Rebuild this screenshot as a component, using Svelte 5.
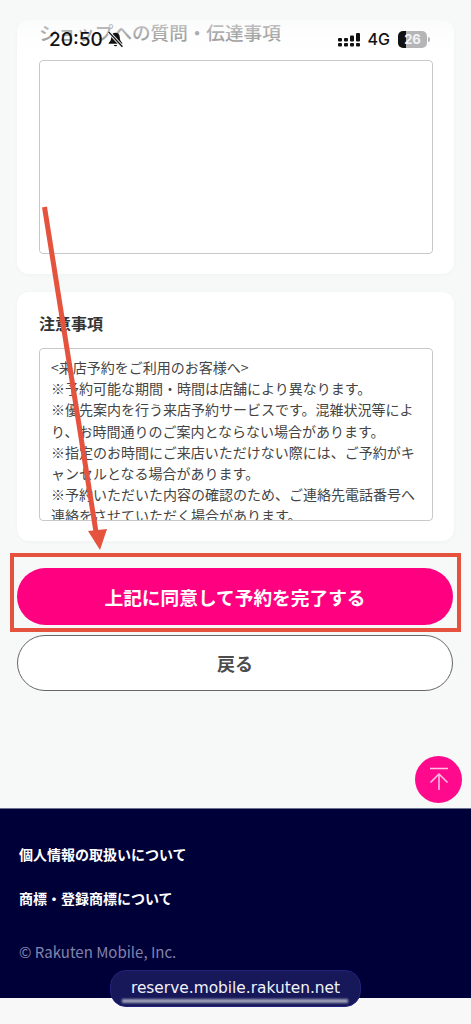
<script>
  // 注意事項の本文
  const notes = `<来店予約をご利用のお客様へ>
※予約可能な期間・時間は店舗により異なります。
※優先案内を行う来店予約サービスです。混雑状況等により、お時間通りのご案内とならない場合があります。
※指定のお時間にご来店いただけない際には、ご予約がキャンセルとなる場合があります。
※予約いただいた内容の確認のため、ご連絡先電話番号へ連絡をさせていただく場合があります。`;
</script>

<div class="page">
  <main>
    <section class="card first">
      <h2>ショップへの質問・伝達事項</h2>
      <div class="field"></div>
    </section>

    <section class="card second">
      <h2>注意事項</h2>
      <div class="notes">{notes}</div>
    </section>

    <div class="actions">
      <button class="primary">上記に同意して予約を完了する</button>
      <button class="back">戻る</button>
    </div>
  </main>

  <footer>
    <a href="#privacy">個人情報の取扱いについて</a>
    <a href="#trademark">商標・登録商標について</a>
    <p>© Rakuten Mobile, Inc.</p>
  </footer>
  <div class="bottom"></div>

  <!-- ステータスバー -->
  <div class="status">
    <div class="left">
      <span class="time">20:50</span>
      <svg width="17" height="17" viewBox="0 0 16 16">
        <path d="M8 1.600c-2.600 0-4 2-4 4.200 0 3-1.500 4.400-2.400 5.400v.8h12.800v-.8c-.9-1-2.400-2.400-2.400-5.400 0-2.200-1.400-4.200-4-4.200z" fill="#111" />
        <path d="M6.300 13.200a1.800 1.800 0 0 0 3.400 0z" fill="#111" />
        <path d="M1.500 .8 14.500 14.800" stroke="#eeeeef" stroke-width="3" />
        <path d="M1.500 .8 14.500 14.800" stroke="#111" stroke-width="1.200" />
      </svg>
    </div>
    <div class="right">
      <svg width="24" height="15" viewBox="0 0 24 15" fill="#111">
        <rect x="1" y="6" width="4" height="3.500" rx="1" />
        <rect x="1" y="11" width="4" height="3.500" rx="1" />
        <rect x="7" y="6" width="4" height="3.500" rx="1" />
        <rect x="7" y="11" width="4" height="3.500" rx="1" />
        <rect x="13" y="3.500" width="4" height="6" rx="1" />
        <rect x="13" y="11" width="4" height="3.500" rx="1" />
        <rect x="19" y="1" width="4" height="8.500" rx="1" />
        <rect x="19" y="11" width="4" height="3.500" rx="1" />
      </svg>
      <span class="net">4G</span>
      <div class="battery"><span>26</span></div>
    </div>
  </div>

  <button class="to-top" aria-label="ページ上部へ">
    <svg width="30" height="30" viewBox="0 0 30 30" fill="none" stroke="#ffc4e4" stroke-width="1.500">
      <path d="M6 3.500H24" />
      <path d="M15 9V25" />
      <path d="M6.500 17.500 15 9l8.500 8.500" />
    </svg>
  </button>

  <div class="url">
    <span>reserve.mobile.rakuten.net</span>
    <i></i>
  </div>

  <!-- 赤い注釈 -->
  <div class="frame"></div>
  <svg class="arrow" width="471" height="1024" viewBox="0 0 471 1024">
    <path d="M44.500 207 96 532" stroke="#e5533f" stroke-width="5" />
    <path d="M88 531 107 529 100 550z" fill="#e5533f" />
  </svg>
</div>

<style>
  :global(body) {
    margin: 0;
    background: #fff;
  }

  .page {
    position: relative;
    width: 471px;
    height: 1024px;
    overflow: hidden;
    font-family: "Noto Sans CJK JP", "Noto Sans", sans-serif;
    color: #333;
  }

  main {
    height: 808px;
    padding: 20px 17px 0;
    box-sizing: border-box;
    background: #f7f8f8;
  }

  .card {
    background: #fff;
    border-radius: 12px;
    box-sizing: border-box;
    padding: 0 21px 0 22px;
    box-shadow: 0 1px 4px rgba(0, 0, 0, 0.03);
  }

  .first {
    height: 254px;
  }

  .second {
    height: 249px;
    margin-top: 18px;
    padding-top: 19px;
  }

  h2 {
    margin: 0;
    font-size: 16px;
    line-height: 24px;
    font-weight: 700;
    color: #333;
  }

  .first h2 {
    height: 26px;
    font-size: 18.600px;
    line-height: 24px;
    font-weight: 500;
    color: #8f8f8f;
  }

  .field,
  .notes {
    border: 1px solid #c9c9cc;
    border-radius: 4px;
    background: #fff;
    box-sizing: border-box;
  }

  .field {
    height: 194px;
    margin-top: 14px;
  }

  .notes {
    height: 173px;
    margin-top: 13px;
    padding: 8px 11px 0;
    font-size: 14px;
    line-height: 21.200px;
    color: #444;
    white-space: pre-line;
    overflow: hidden;
  }

  .actions {
    display: flex;
    flex-direction: column;
    gap: 10px;
    margin-top: 27px;
  }

  .actions button {
    width: 436px;
    border-radius: 29px;
    font-family: inherit;
    font-weight: 700;
    box-sizing: border-box;
    padding: 0;
  }

  .primary {
    height: 57px;
    border: 0;
    background: #ff0080;
    color: #fff;
    font-size: 18.700px;
  }

  .back {
    height: 56px;
    border: 1px solid #666;
    background: #fff;
    color: #4d4d4d;
    font-size: 18px;
  }

  footer {
    display: flex;
    flex-direction: column;
    align-items: flex-start;
    height: 190px;
    padding: 34px 19px 0;
    box-sizing: border-box;
    background: #000038;
    border-top: 1px solid #6e7191;
  }

  footer a {
    font-size: 14px;
    line-height: 22px;
    font-weight: 700;
    color: #fff;
    text-decoration: none;
    margin-bottom: 22px;
  }

  footer p {
    margin: 10px 0 0;
    font-size: 15px;
    line-height: 22px;
    color: #8283ab;
  }

  .bottom {
    height: 26px;
    background: #f8f8f9;
  }

  .status {
    position: absolute;
    top: 0;
    left: 0;
    right: 0;
    height: 62px;
    display: flex;
    justify-content: space-between;
    padding: 27px 44px 0 49px;
    box-sizing: border-box;
    background: linear-gradient(#f7f8f8 0, rgba(247, 248, 248, 0.2) 60%, transparent 100%);
    color: #111;
    font-family: Inter, "Liberation Sans", sans-serif;
  }

  .left,
  .right {
    display: flex;
    align-items: center;
    height: 24px;
  }

  .left {
    gap: 4px;
  }

  .right {
    gap: 7px;
  }

  .time {
    font-size: 19px;
    font-weight: 500;
  }

  .net {
    font-size: 16px;
    font-weight: 500;
  }

  .battery {
    position: relative;
    width: 29px;
    height: 17px;
    margin-left: 1px;
    border-radius: 5px;
    background: linear-gradient(90deg, #111 26%, #b5b5b7 26%);
    text-align: center;
  }

  .battery::after {
    content: "";
    position: absolute;
    right: -3px;
    top: 6px;
    width: 2px;
    height: 5px;
    border-radius: 0 2px 2px 0;
    background: #b5b5b7;
  }

  .battery span {
    display: block;
    font-size: 13px;
    line-height: 17px;
    font-weight: 700;
    color: #f3f3f3;
  }

  .to-top {
    position: absolute;
    left: 415px;
    top: 756px;
    width: 47px;
    height: 47px;
    padding: 0;
    border: 0;
    border-radius: 50%;
    background: #ff0a8c;
    display: flex;
    align-items: center;
    justify-content: center;
  }

  .url {
    position: absolute;
    left: 110px;
    top: 970px;
    width: 251px;
    height: 37px;
    box-sizing: border-box;
    border: 1px solid #23237e;
    border-radius: 16px;
    background: #16185a;
    text-align: center;
    overflow: hidden;
  }

  .url span {
    display: block;
    margin-top: 6px;
    font-family: "DejaVu Sans", sans-serif;
    font-size: 15.400px;
    line-height: 22px;
    color: #f2f2f6;
  }

  .url i {
    position: absolute;
    left: 11px;
    right: 12px;
    bottom: 3px;
    height: 4px;
    background: #9fa0b8;
    filter: blur(1px);
  }

  .frame {
    position: absolute;
    left: 10px;
    top: 553px;
    width: 451px;
    height: 79px;
    box-sizing: border-box;
    border: 4.500px solid #e5533f;
  }

  .arrow {
    position: absolute;
    top: 0;
    left: 0;
    pointer-events: none;
  }
</style>
